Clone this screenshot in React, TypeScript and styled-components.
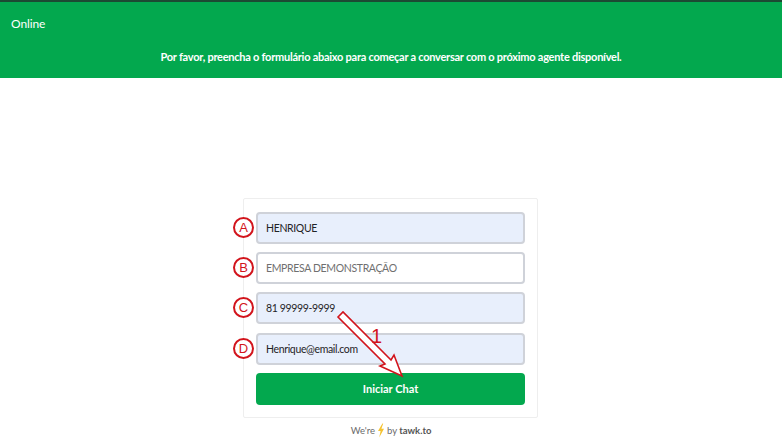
import React from "react";
import styled, { createGlobalStyle } from "styled-components";

const Global = createGlobalStyle`
  html, body { margin: 0; padding: 0; background: #fff; }
  body { font-family: Lato, "Open Sans", "Liberation Sans", sans-serif; overflow: hidden; }
  * { box-sizing: border-box; }
`;

const Page = styled.div`
  width: 782px;
  height: 438px;
  display: flex;
  flex-direction: column;
  position: relative;
  overflow: hidden;
`;

const Header = styled.header`
  width: 100%;
  height: 78px;
  flex: none;
  background: #03a84e;
  border-top: 2px solid #1c4a33;
  color: #fff;
  padding: 14px 0 0 11px;
`;

const Status = styled.div`
  font-size: 12px;
  line-height: 16px;
  letter-spacing: -0.1px;
`;

const Message = styled.div`
  margin: 17px 0 0 -11px;
  text-align: center;
  font-size: 11px;
  line-height: 16px;
  font-weight: 700;
  letter-spacing: -0.25px;
`;

const Card = styled.form`
  margin: 120px 0 0 243px;
  width: 295px;
  height: 220px;
  border: 1px solid #eeeeee;
  border-radius: 2px;
  padding: 13px 12px 0 12px;
  display: flex;
  flex-direction: column;
  gap: 8.2px;
  position: relative;
`;

const Row = styled.div`
  position: relative;
  height: 32px;
  flex: none;
`;

const Field = styled.div<{ $filled?: boolean; $muted?: boolean }>`
  height: 100%;
  border: 2px solid #cfd2d9;
  border-radius: 4px;
  background: ${(p) => (p.$filled ? "#e8effc" : "#fff")};
  color: ${(p) => (p.$muted ? "#6f6f6f" : "#1f2326")};
  font-size: 10.5px;
  letter-spacing: -0.35px;
  line-height: 28px;
  padding-left: 8px;
`;

const Badge = styled.span`
  position: absolute;
  left: -23px;
  top: 5px;
  width: 21px;
  height: 21px;
  border: 2px solid #d2141c;
  border-radius: 50%;
  background: #fff;
  color: #d2141c;
  font-family: "Liberation Sans", Arial, sans-serif;
  font-size: 13px;
  line-height: 17px;
  text-align: center;
`;

const Submit = styled.button`
  height: 32px;
  flex: none;
  border: none;
  border-radius: 4px;
  background: #03a84e;
  color: #fff;
  font-family: inherit;
  font-size: 11px;
  font-weight: 700;
  padding: 0;
`;

const Footer = styled.footer`
  margin-top: 5px;
  display: flex;
  justify-content: center;
  align-items: center;
  gap: 2px;
  font-size: 9.5px;
  line-height: 14px;
  color: #6a6a6a;
`;

const Brand = styled.b`
  color: #555;
  font-weight: 700;
`;

const Callout = styled.svg`
  position: absolute;
  left: 330px;
  top: 305px;
  width: 80px;
  height: 80px;
  pointer-events: none;
`;

const CalloutNumber = styled.span`
  position: absolute;
  left: 371px;
  top: 325px;
  color: #d2141c;
  font-family: "Liberation Sans", Arial, sans-serif;
  font-size: 20px;
  line-height: 22px;
`;

const fields = [
  { id: "A", value: "HENRIQUE", filled: true },
  { id: "B", value: "EMPRESA DEMONSTRAÇÃO", muted: true },
  { id: "C", value: "81 99999-9999", filled: true },
  { id: "D", value: "Henrique@email.com", filled: true },
];

export default function App() {
  return (
    <Page>
      <Global />
      <Header>
        <Status>Online</Status>
        <Message>Por favor, preencha o formulário abaixo para começar a conversar com o próximo agente disponível.</Message>
      </Header>
      <Card onSubmit={(e) => e.preventDefault()}>
        {fields.map((f) => (
          <Row key={f.id}>
            <Badge>{f.id}</Badge>
            <Field $filled={f.filled} $muted={f.muted}>{f.value}</Field>
          </Row>
        ))}
        <Submit type="submit">Iniciar Chat</Submit>
      </Card>
      <Footer>
        We're
        <svg width="8" height="15" viewBox="0 0 8 15" aria-hidden="true">
          <path d="M5.4 0.5 L1 8 H3.6 L2.2 14.5 L7 5.8 H4.4 L6.2 0.5 Z" fill="#f5c332" />
        </svg>
        by <Brand>tawk.to</Brand>
      </Footer>
      <Callout viewBox="0 0 80 80" aria-hidden="true">
        <path
          d="M8 12 L13 7 L61 55 L64 50 L72 71 L50 61 L55 59 Z"
          fill="#fff"
          stroke="#d2141c"
          strokeWidth="1.6"
          strokeLinejoin="miter"
        />
      </Callout>
      <CalloutNumber>1</CalloutNumber>
    </Page>
  );
}
